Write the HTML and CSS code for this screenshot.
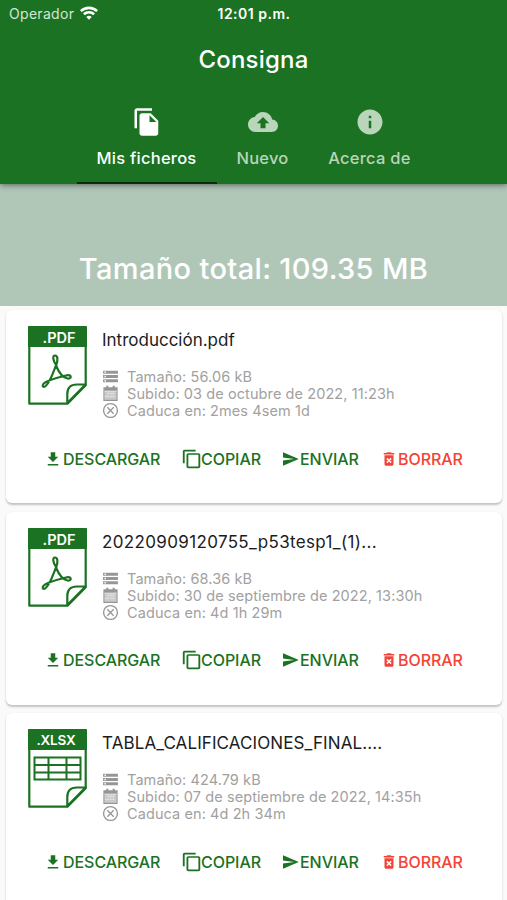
FILE: index.html
```html
<!DOCTYPE html>
<html lang="es">
<head>
<meta charset="utf-8">
<title>Consigna</title>
<link rel="stylesheet" href="styles.css">
</head>
<body>
<svg class="sprite" aria-hidden="true">
  <symbol id="download" viewBox="0 0 24 24"><path d="M19 9h-4V3H9v6H5l7 7 7-7zM5 18.500v2h14v-2H5z"/></symbol>
  <symbol id="copy" viewBox="0 0 24 24" preserveAspectRatio="none"><path d="M16 1H4c-1.100 0-2 .9-2 2v14h2V3h12V1zm3 4H8c-1.100 0-2 .9-2 2v14c0 1.100.9 2 2 2h11c1.100 0 2-.9 2-2V7c0-1.100-.9-2-2-2zm0 16H8V7h11v14z"/></symbol>
  <symbol id="send" viewBox="0 0 24 24"><path d="M2.010 21 23 12 2.010 3 2 10l15 2-15 2z"/></symbol>
  <symbol id="trash" viewBox="0 0 24 24"><path fill-rule="evenodd" d="M6 19c0 1.100.9 2 2 2h8c1.100 0 2-.9 2-2V7H6zM8.460 11.880l1.410-1.410L12 12.590l2.120-2.120 1.410 1.410L13.410 14l2.120 2.120-1.410 1.410L12 15.410l-2.120 2.120-1.410-1.410L10.590 14zM15.500 4l-1-1h-5l-1 1H5v2h14V4z"/></symbol>
  <symbol id="storage" viewBox="0 0 24 24"><path fill-rule="evenodd" d="M1.500 20h21v-4h-21v4zm2-3h2v2h-2v-2zM1.500 4v4h21V4h-21zm4 3h-2V5h2v2zm-4 7h21v-4h-21v4zm2-3h2v2h-2v-2z"/></symbol>
  <symbol id="calendar" viewBox="0 0 24 24"><path d="M6 1h3v2h6V1h3v2h4v5H2V3h4z"/><path fill="none" stroke="currentColor" stroke-width="1.500" d="M2.700 8v13.700h18.600V8"/><path opacity=".5" d="M3 9h18v13H3z"/><path d="M8 11v2h2v-2zm3.500 0v2h2v-2zm3.500 0v2h2v-2zM4.500 15v2h2v-2zm3.500 0v2h2v-2zm3.500 0v2h2v-2zm3.500 0v2h2v-2z" fill="#fff" opacity=".6"/></symbol>
  <symbol id="expire" viewBox="0 0 24 24"><g fill="none" stroke="currentColor" stroke-width="1.900"><circle cx="12" cy="12" r="9.800"/><path d="m7.500 7.500 9 9m0-9-9 9"/></g></symbol>
  <symbol id="sheet" viewBox="0 0 59 79"><path d="M1.300 1.300h56.400v58L39.500 77.700H1.300z" fill="#fff" stroke="currentColor" stroke-width="2.200" stroke-linejoin="round"/><path d="M0 1q0-1 1-1h57q1 0 1 1v20H0z"/><path d="M39.300 77V68q0-9.500 9.500-9.500H57.500z" fill="#fff" stroke="currentColor" stroke-width="2.200" stroke-linejoin="round"/></symbol>
  <symbol id="acrobat" viewBox="0 0 59 79"><path fill="none" stroke="currentColor" stroke-width="2.200" stroke-linejoin="round" d="M28.500 39.500C24.500 34.500 24.500 29.500 27 29.500s3.500 4 1 10C25 47 21.500 58 17 60.500c-2.500 1.300-3.500-1.500-.5-3.700C20 54 30 51.500 38 49.500c6-1.500 6 3.500 1.500 3-5.500-.8-9-7-11.500-13z"/></symbol>
  <symbol id="table" viewBox="0 0 59 79"><path fill="none" stroke="currentColor" stroke-width="2" d="M6.500 28.500h46v22h-46zM6.500 36h46m-46 7.500h46M20.500 28.500v22m18-22v22"/></symbol>
</svg>

<header class="top">
  <div class="status">
    <div class="carrier"><span>Operador</span>
      <svg class="wifi" viewBox="0 0 18 14"><g fill="none" stroke="#fff" stroke-width="2.600"><path d="M.9 5.100a11.700 11.700 0 0 1 16.200 0M3.900 8.300a7.400 7.400 0 0 1 10.200 0"/></g><path fill="#fff" d="M6.300 10.900q2.700-2.300 5.400 0L9 13.700z"/></svg>
    </div>
    <span class="clock">12:01 p.m.</span>
  </div>
  <h1 class="title"><span>Consigna</span></h1>
  <nav class="tabs">
    <a class="tab active"><svg viewBox="0 0 24 24"><path d="M16 1H4C2.900 1 2 1.900 2 3v14h2V3h12zM15 5H8c-1.100 0-2 .9-2 2v14c0 1.100.9 2 2 2h11c1.100 0 2-.9 2-2V11zm-1 7V6.500l5.500 5.500z"/></svg><span>Mis ficheros</span></a>
    <a class="tab"><svg viewBox="0 0 24 24"><path d="M19.350 10.040C18.670 6.590 15.640 4 12 4 9.110 4 6.600 5.640 5.350 8.040 2.340 8.360 0 10.910 0 14c0 3.310 2.690 6 6 6h13c2.760 0 5-2.240 5-5 0-2.640-2.050-4.780-4.650-4.960zM14 13v4h-4v-4H7l5-5 5 5h-3z"/></svg><span>Nuevo</span></a>
    <a class="tab"><svg viewBox="0 0 24 24"><path d="M12 2C6.480 2 2 6.480 2 12s4.480 10 10 10 10-4.480 10-10S17.520 2 12 2zm1 15h-2v-6h2v6zm0-8h-2V7h2v2z"/></svg><span>Acerca de</span></a>
  </nav>
</header>

<section class="total"><span>Tamaño total: 109.35 MB</span></section>

<main class="files">
  <article class="card">
    <div class="file">
      <div class="badge"><svg><use href="#sheet"/><use href="#acrobat"/></svg><span class="ext">.PDF</span></div>
      <div class="info">
        <h2>Introducción.pdf</h2>
        <ul class="meta">
          <li><svg><use href="#storage"/></svg><span>Tamaño: 56.06 kB</span></li>
          <li><svg><use href="#calendar"/></svg><span>Subido: 03 de octubre de 2022, 11:23h</span></li>
          <li><svg><use href="#expire"/></svg><span>Caduca en: 2mes 4sem 1d</span></li>
        </ul>
      </div>
    </div>
    <div class="actions">
      <a class="download"><svg><use href="#download"/></svg><span>DESCARGAR</span></a>
      <a class="copy"><svg><use href="#copy"/></svg><span>COPIAR</span></a>
      <a class="send"><svg><use href="#send"/></svg><span>ENVIAR</span></a>
      <a class="delete"><svg><use href="#trash"/></svg><span>BORRAR</span></a>
    </div>
  </article>
  <article class="card">
    <div class="file">
      <div class="badge"><svg><use href="#sheet"/><use href="#acrobat"/></svg><span class="ext">.PDF</span></div>
      <div class="info">
        <h2 class="numeric">20220909120755_p53tesp1_(1)...</h2>
        <ul class="meta">
          <li><svg><use href="#storage"/></svg><span>Tamaño: 68.36 kB</span></li>
          <li><svg><use href="#calendar"/></svg><span>Subido: 30 de septiembre de 2022, 13:30h</span></li>
          <li><svg><use href="#expire"/></svg><span>Caduca en: 4d 1h 29m</span></li>
        </ul>
      </div>
    </div>
    <div class="actions">
      <a class="download"><svg><use href="#download"/></svg><span>DESCARGAR</span></a>
      <a class="copy"><svg><use href="#copy"/></svg><span>COPIAR</span></a>
      <a class="send"><svg><use href="#send"/></svg><span>ENVIAR</span></a>
      <a class="delete"><svg><use href="#trash"/></svg><span>BORRAR</span></a>
    </div>
  </article>
  <article class="card">
    <div class="file">
      <div class="badge"><svg><use href="#sheet"/><use href="#table"/></svg><span class="ext xlsx">.XLSX</span></div>
      <div class="info">
        <h2 class="caps">TABLA_CALIFICACIONES_FINAL....</h2>
        <ul class="meta">
          <li><svg><use href="#storage"/></svg><span>Tamaño: 424.79 kB</span></li>
          <li><svg><use href="#calendar"/></svg><span>Subido: 07 de septiembre de 2022, 14:35h</span></li>
          <li><svg><use href="#expire"/></svg><span>Caduca en: 4d 2h 34m</span></li>
        </ul>
      </div>
    </div>
    <div class="actions">
      <a class="download"><svg><use href="#download"/></svg><span>DESCARGAR</span></a>
      <a class="copy"><svg><use href="#copy"/></svg><span>COPIAR</span></a>
      <a class="send"><svg><use href="#send"/></svg><span>ENVIAR</span></a>
      <a class="delete"><svg><use href="#trash"/></svg><span>BORRAR</span></a>
    </div>
  </article>
</main>
</body>
</html>
```
FILE: styles.css
```css
* { box-sizing: border-box; }
html { height: 900px; overflow: hidden; }
body {
  margin: 0;
  height: 900px;
  overflow: hidden;
  background: #fafafa;
  color: #1c1c1c;
  font-family: Inter, "Liberation Sans", sans-serif;
}
svg { display: block; fill: currentColor; flex: none; }
.sprite { display: none; }
h1, h2, ul { margin: 0; padding: 0; font-weight: 400; }
span, h2 { white-space: nowrap; }

.top {
  position: relative;
  height: 184px;
  background: #1b7222;
  color: #fff;
  box-shadow: 0 1px 6px rgba(0, 0, 0, .5);
}
.status {
  display: grid;
  grid-template-columns: 1fr auto 1fr;
  height: 28px;
  padding-left: 9px;
  align-items: center;
  font-size: 14px;
  line-height: 28px;
}
.carrier { display: flex; align-items: center; gap: 6px; color: #d5e6d5; letter-spacing: .3px; }
.wifi { width: 18px; height: 14px; margin-top: -2px; }
.clock { font-weight: 600; letter-spacing: .5px; margin-right: 8px; }
.title {
  height: 64px;
  text-align: center;
  font-size: 24px;
  font-weight: 500;
  line-height: 64px;
  letter-spacing: .2px;
}
.tabs { display: flex; justify-content: center; height: 92px; }
.tab {
  display: flex;
  flex-direction: column;
  align-items: center;
  width: 140px;
  padding-top: 14.500px;
  gap: 11.500px;
  color: #b9d5ba;
  font-size: 16.500px;
  font-weight: 500;
  line-height: 20px;
  letter-spacing: .25px;
}
.tab:nth-child(2) { width: 92px; }
.tab:nth-child(3) { width: 122px; }
.tab svg { width: 30px; height: 30px; }
.tab.active { color: #fff; border-bottom: 2px solid #0a2c0d; }

.total {
  height: 122px;
  padding-top: 67px;
  background: #b0c7b8;
  color: #fff;
  text-align: center;
  font-size: 29px;
  font-weight: 500;
  line-height: 36px;
  letter-spacing: .35px;
}

.files { display: flex; flex-direction: column; gap: 8.500px; padding: 4px 5px 0 6px; }
.card {
  flex: none;
  height: 193px;
  padding: 16px 0 0 22px;
  border-radius: 6px;
  background: #fff;
  box-shadow: 0 1.500px 2px rgba(0, 0, 0, .22);
}
.file { display: flex; gap: 15px; height: 115px; }
.badge { display: grid; width: 59px; height: 79px; color: #1b7222; }
.badge > * { grid-area: 1 / 1; }
.badge svg { width: 59px; height: 79px; }
.ext {
  justify-self: end;
  padding-right: 11.500px;
  color: #fff;
  font-size: 14.500px;
  font-weight: 600;
  line-height: 23px;
}
.ext.xlsx { font-size: 13.500px; letter-spacing: -.2px; }
.info h2 { font-size: 17px; line-height: 28px; }
.info .numeric { letter-spacing: .35px; }
.info .caps { letter-spacing: .1px; }
.meta { list-style: none; margin-top: 14px; color: #a1a1a1; font-size: 14.500px; letter-spacing: .09px; }
.meta li { display: flex; align-items: center; gap: 8px; height: 17px; line-height: 17px; }
.meta svg { width: 17px; height: 17px; color: #969696; }
.actions {
  display: flex;
  height: 35px;
  align-items: center;
  color: #1b7222;
  font-size: 16px;
  font-weight: 500;
  line-height: 20px;
  letter-spacing: -.05px;
}
.actions a { display: flex; align-items: center; }
.actions svg { width: 18px; height: 18px; }
.download { width: 153px; padding-left: 16px; }
.actions .download svg { margin-right: 1px; }
.copy { width: 100px; }
.actions .copy svg { width: 22px; height: 20px; margin-right: -2px; }
.send { width: 99px; }
.actions .send svg { width: 19px; }
.delete { color: #f44336; }
```
